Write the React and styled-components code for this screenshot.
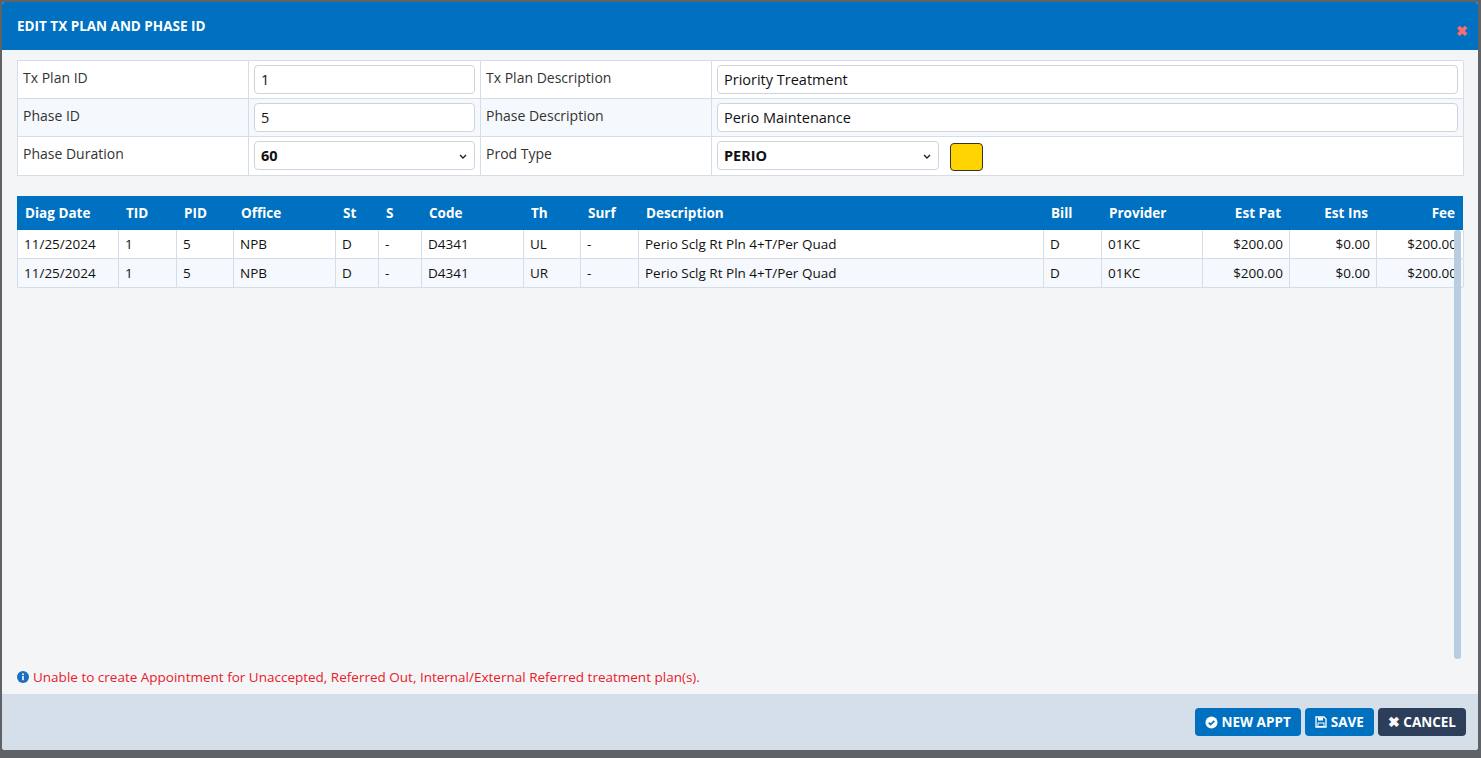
import React from "react";
import styled, { createGlobalStyle } from "styled-components";

const Global = createGlobalStyle`
  html, body { margin:0; padding:0; background:#5f6368; }
  body { font-family: "Open Sans", "Liberation Sans", sans-serif; color:#222; }
  * { box-sizing: border-box; }
`;
const Page = styled.div`width:1481px;height:758px;padding:2px 3px 8px 2px;`;
const Modal = styled.div`
  width:1476px;height:748px;background:#f4f5f7;border-radius:3px;overflow:hidden;
  display:flex;flex-direction:column;
`;
const Header = styled.div`
  height:48px;background:#0070c0;color:#fff;display:flex;align-items:center;justify-content:space-between;
  padding:0 10px 0 15px;font-weight:700;font-size:13.5px;
`;
const Close = styled.span`color:#ff6b6b;font-size:14px;font-weight:700;margin-top:8px;`;
const Body = styled.div`flex:1;padding:10px 15px 0 15px;display:flex;flex-direction:column;`;
const FormTable = styled.div`
  display:grid;grid-template-columns:231px 232px 231px 752px;border:1px solid #d5dde8;border-bottom:none;border-right:none;background:#fff;
`;
const Cell = styled.div`
  height:${p=>p.$h}px;border-right:1px solid #d5dde8;border-bottom:1px solid #d5dde8;
  background:${p=>p.$alt?"#f5f8fc":"#fff"};padding:${p=>p.$input?"4px 5px":"7px 5px"};
  font-size:14px;color:#333;display:flex;gap:11px;align-items:flex-start;
`;
const Input = styled.div`
  flex:1;height:29px;border:1px solid #d0d4da;border-radius:4px;background:#fff;padding:0 6px;
  display:flex;align-items:center;font-size:14.5px;color:#111;justify-content:space-between;
  font-weight:${p=>p.$bold?700:400};
  ${p=>p.$w?`flex:none;width:${p.$w}px;`:""}
`;
const Swatch = styled.div`width:33px;height:28px;background:#ffd400;border:1px solid #333;border-radius:4px;margin-top:2px;`;
const Grid = styled.div`margin-top:20px;position:relative;flex:1;`;
const cols = "101px 58px 57px 102px 43px 43px 102px 57px 58px 405px 58px 101px 87px 87px 87px";
const HeadRow = styled.div`
  display:grid;grid-template-columns:${cols};height:34px;background:#0070c0;color:#fff;font-weight:700;font-size:13.5px;
`;
const H = styled.div`padding:0 8px;display:flex;align-items:center;justify-content:${p=>p.$r?"flex-end":"flex-start"};`;
const Row = styled.div`
  display:grid;grid-template-columns:${cols};height:29px;background:${p=>p.$alt?"#f5f8fc":"#fff"};
  border-left:1px solid #d5dde8;border-bottom:1px solid #d5dde8;font-size:13.5px;color:#111;
`;
const D = styled.div`
  padding:0 6px;display:flex;align-items:center;border-right:1px solid #d5dde8;white-space:nowrap;overflow:hidden;
  justify-content:${p=>p.$r?"flex-end":"flex-start"};
`;
const Scroll = styled.div`position:absolute;right:2px;top:34px;width:7px;height:429px;background:#b8cde0;border-radius:3px;`;
const Msg = styled.div`color:#e8202a;font-size:13.5px;display:flex;align-items:center;gap:4px;padding-bottom:8px;`;
const Footer = styled.div`
  height:56px;background:#d5dfe9;display:flex;justify-content:flex-end;align-items:center;gap:4px;padding:0 12px 0 0;
`;
const Btn = styled.button`
  height:28px;border:none;border-radius:4px;background:${p=>p.$dark?"#2d3e5a":"#0070c0"};color:#fff;
  font-family:inherit;font-weight:700;font-size:13.5px;padding:0 10px;display:flex;align-items:center;gap:4px;
`;

const rows = [
  ["11/25/2024","1","5","NPB","D","-","D4341","UL","-","Perio Sclg Rt Pln 4+T/Per Quad","D","01KC","$200.00","$0.00","$200.00"],
  ["11/25/2024","1","5","NPB","D","-","D4341","UR","-","Perio Sclg Rt Pln 4+T/Per Quad","D","01KC","$200.00","$0.00","$200.00"],
];
const heads = ["Diag Date","TID","PID","Office","St","S","Code","Th","Surf","Description","Bill","Provider","Est Pat","Est Ins","Fee"];
const Chev = () => <svg width="10" height="10" viewBox="0 0 10 10"><path d="M2 4l3 3 3-3" fill="none" stroke="#222" strokeWidth="1.4"/></svg>;

export default function App(){
  return <Page><Global/><Modal>
    <Header>EDIT TX PLAN AND PHASE ID<Close>✖</Close></Header>
    <Body>
      <FormTable>
        <Cell $h={38}>Tx Plan ID</Cell><Cell $h={38} $input><Input>1</Input></Cell>
        <Cell $h={38}>Tx Plan Description</Cell><Cell $h={38} $input><Input>Priority Treatment</Input></Cell>
        <Cell $h={38} $alt>Phase ID</Cell><Cell $h={38} $alt $input><Input>5</Input></Cell>
        <Cell $h={38} $alt>Phase Description</Cell><Cell $h={38} $alt $input><Input>Perio Maintenance</Input></Cell>
        <Cell $h={39}>Phase Duration</Cell><Cell $h={39} $input><Input $bold>60<Chev/></Input></Cell>
        <Cell $h={39}>Prod Type</Cell><Cell $h={39} $input><Input $bold $w={222}>PERIO<Chev/></Input><Swatch/></Cell>
      </FormTable>
      <Grid>
        <HeadRow>{heads.map((h,i)=><H key={h} $r={i>=12}>{h}</H>)}</HeadRow>
        {rows.map((r,j)=><Row key={j} $alt={j%2===1}>{r.map((c,i)=><D key={i} $r={i>=12}>{c}</D>)}</Row>)}
        <Scroll/>
      </Grid>
      <Msg><svg width="12" height="12" viewBox="0 0 12 12"><circle cx="6" cy="6" r="6" fill="#1a6fc0"/><rect x="5.2" y="5" width="1.6" height="4.2" fill="#fff"/><circle cx="6" cy="3.3" r="0.95" fill="#fff"/></svg>
        Unable to create Appointment for Unaccepted, Referred Out, Internal/External Referred treatment plan(s).</Msg>
    </Body>
    <Footer>
      <Btn><svg width="13" height="13" viewBox="0 0 14 14"><circle cx="7" cy="7" r="6.5" fill="#fff"/><path d="M4 7.2l2 2 4-4" fill="none" stroke="#0070c0" strokeWidth="1.8"/></svg>NEW APPT</Btn>
      <Btn><svg width="12" height="12" viewBox="0 0 12 12"><path d="M1 1h8l2 2v8H1z" fill="none" stroke="#fff" strokeWidth="1.3"/><rect x="3" y="1.5" width="5" height="3" fill="#fff"/><rect x="3" y="7" width="6" height="3.5" fill="none" stroke="#fff"/></svg>SAVE</Btn>
      <Btn $dark>✖ CANCEL</Btn>
    </Footer>
  </Modal></Page>;
}
